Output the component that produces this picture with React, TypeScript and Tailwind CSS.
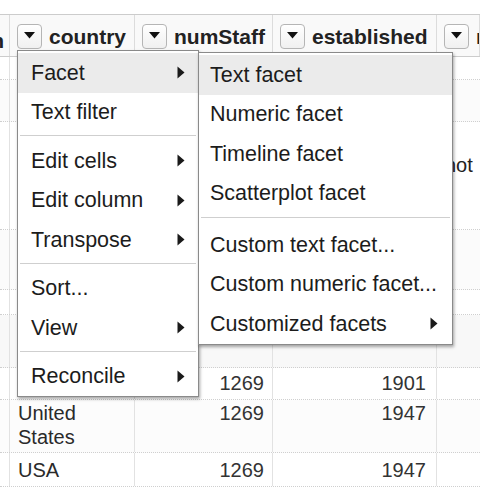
import React from 'react'

type Row = { h: number; bg: string; pt: number; cells: [string, string, string, string] }

// column widths (px): partial first col, country, numStaff, established, rest
const cols = ['w-[10px]', 'w-[125px]', 'w-[138px]', 'w-[164px]', 'flex-1']

const rows: Row[] = [
  { h: 23, bg: 'bg-white', pt: 0, cells: ['', '', '', ''] },
  { h: 42, bg: 'bg-[#fbfbfb]', pt: 0, cells: ['', '', '', ''] },
  { h: 108, bg: 'bg-white', pt: 31, cells: ['', '', '', 'not'] },
  { h: 60, bg: 'bg-[#fbfbfb]', pt: 0, cells: ['', '', '', ''] },
  { h: 25, bg: 'bg-white', pt: 0, cells: ['', '', '', ''] },
  { h: 53, bg: 'bg-[#f8f8f8]', pt: 0, cells: ['', '', '', ''] },
  { h: 32, bg: 'bg-white', pt: 3, cells: ['', '', '1269', '1901'] },
  { h: 53, bg: 'bg-[#fcfcfc]', pt: 1, cells: ['', 'United States', '1269', '1947'] },
  { h: 34, bg: 'bg-white', pt: 5, cells: ['', 'USA', '1269', '1947'] },
]

function DropButton() {
  return (
    <div className="flex h-[25px] w-[25px] shrink-0 items-center justify-center rounded-[4px] border border-[#b5b5b5] bg-gradient-to-b from-white to-[#f0f0f0]">
      <svg width="11" height="7" viewBox="0 0 11 7" className="-mt-[2px]">
        <path d="M0 0 H11 L5.5 6.5 Z" fill="#111" />
      </svg>
    </div>
  )
}

function HeaderCell({ label, className }: { label: string; className: string }) {
  return (
    <div className={`${className} flex items-center gap-[7px] overflow-hidden border-r border-[#dcdcdc] pl-[7px] pt-[2px]`}>
      <DropButton />
      <span className="whitespace-nowrap text-[21px] font-bold text-[#222]">{label}</span>
    </div>
  )
}

function Arrow() {
  return (
    <svg width="8" height="13" viewBox="0 0 8 13">
      <path d="M0.5 0.5 L7.5 6.5 L0.5 12.5 Z" fill="#1a1a1a" />
    </svg>
  )
}

type Item = { label: string; sub?: boolean; active?: boolean } | 'sep'

const mainMenu: Item[] = [
  { label: 'Facet', sub: true, active: true },
  { label: 'Text filter' },
  'sep',
  { label: 'Edit cells', sub: true },
  { label: 'Edit column', sub: true },
  { label: 'Transpose', sub: true },
  'sep',
  { label: 'Sort...' },
  { label: 'View', sub: true },
  'sep',
  { label: 'Reconcile', sub: true },
]

const facetMenu: Item[] = [
  { label: 'Text facet', active: true },
  { label: 'Numeric facet' },
  { label: 'Timeline facet' },
  { label: 'Scatterplot facet' },
  'sep',
  { label: 'Custom text facet...' },
  { label: 'Custom numeric facet...' },
  { label: 'Customized facets', sub: true },
]

function Menu({ items, className, pl, pr, sep }: { items: Item[]; className: string; pl: string; pr: string; sep: string }) {
  return (
    <div className={`absolute border border-[#8a8a8a] bg-white pt-[2px] shadow-[1px_2px_3px_rgba(0,0,0,0.35)] ${className}`}>
      {items.map((it, i) =>
        it === 'sep' ? (
          <div key={i} className={sep}>
            <div className="mx-[2px] h-px bg-[#cfcfcf]" />
          </div>
        ) : (
          <div
            key={i}
            className={`flex h-[39.5px] items-center justify-between ${pl} ${pr} ${it.active ? 'bg-[#ebebeb]' : ''}`}
          >
            <span className="whitespace-nowrap text-[21.5px] text-[#1c1c1c]">{it.label}</span>
            {it.sub && <Arrow />}
          </div>
        )
      )}
    </div>
  )
}

export default function App() {
  return (
    <div className="relative h-[488px] w-[480px] overflow-hidden bg-white font-['Liberation_Sans','Arial',sans-serif]">
      <div className="h-[14px]" />

      {/* header */}
      <div className="flex h-[43px] border-y border-[#cccccc] bg-[#f9f9f9]">
        <div className={`${cols[0]} flex justify-end overflow-hidden border-r border-[#dcdcdc] pr-[5px] pt-[10px]`}>
          <span className="text-[21px] font-bold text-[#222]">n</span>
        </div>
        <HeaderCell label="country" className={cols[1]} />
        <HeaderCell label="numStaff" className={cols[2]} />
        <HeaderCell label="established" className={cols[3]} />
        <HeaderCell label="name" className={cols[4]} />
      </div>

      {/* rows */}
      {rows.map((r, i) => (
        <div key={i} className={`flex border-b border-dotted border-[#cfcfcf] ${r.bg}`} style={{ height: r.h }}>
          <div className={`${cols[0]} border-r border-[#e2e2e2]`} />
          <div className={`${cols[1]} border-r border-[#e2e2e2] pl-[8px] text-[20px] leading-[24px] text-[#2a2a2a]`} style={{ paddingTop: r.pt }}>
            {r.cells[1] === 'United States' ? (
              <>
                United
                <br />
                States
              </>
            ) : (
              r.cells[1]
            )}
          </div>
          <div className={`${cols[2]} border-r border-[#e2e2e2] pr-[8px] text-right text-[20px] leading-[24px] text-[#333]`} style={{ paddingTop: r.pt }}>
            {r.cells[2]}
          </div>
          <div className={`${cols[3]} border-r border-[#e2e2e2] pr-[10px] text-right text-[20px] leading-[24px] text-[#333]`} style={{ paddingTop: r.pt }}>
            {r.cells[3]}
          </div>
          <div className={`${cols[4]} overflow-hidden whitespace-nowrap pl-[8px] text-[20px] leading-[24px] text-[#222]`} style={{ paddingTop: r.pt }}>
            {i === 2 ? 'not' : ''}
          </div>
        </div>
      ))}

      <Menu items={mainMenu} className="left-[17px] top-[50px] w-[182px]" pl="pl-[13px]" pr="pr-[13px]" sep="pb-[5px] pt-[3px]" />
      <Menu items={facetMenu} className="left-[198px] top-[52px] w-[255px]" pl="pl-[11px]" pr="pr-[14px]" sep="pb-[7px] pt-[4px]" />
    </div>
  )
}
